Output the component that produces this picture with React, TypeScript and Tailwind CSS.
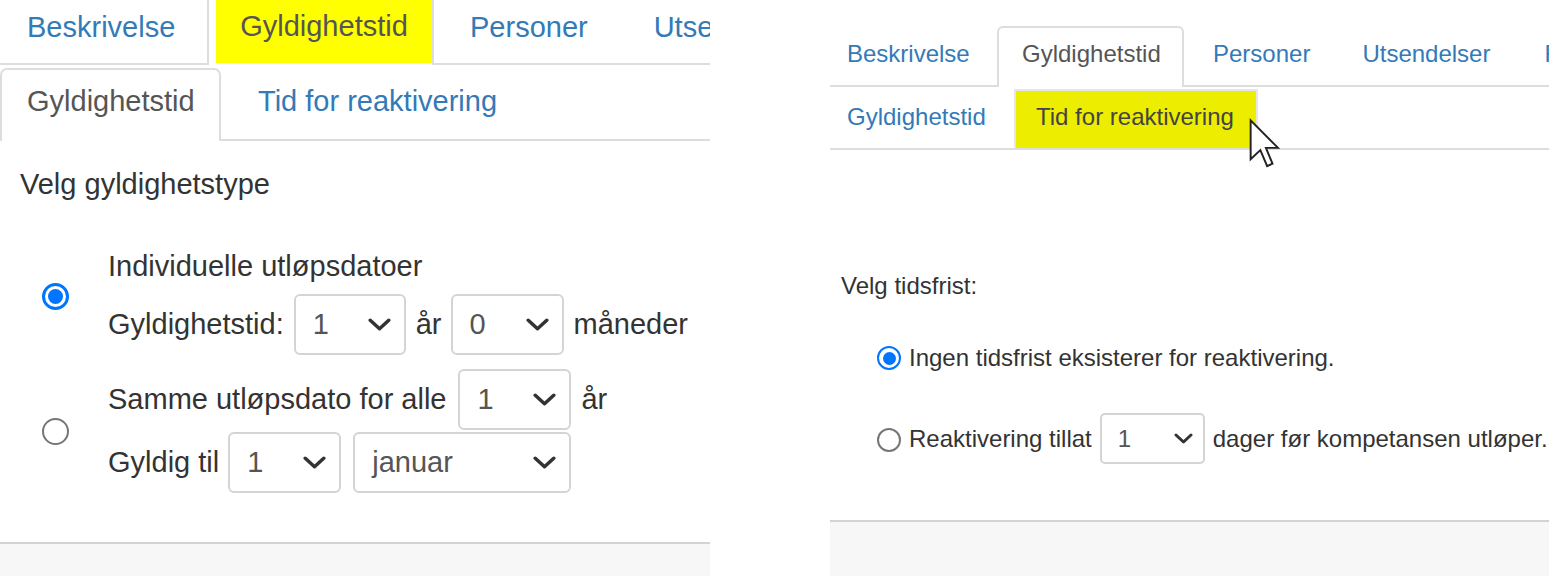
import React from "react";

function Chevron({ w, h, sw }: { w: number; h: number; sw: number }) {
  const p = sw / 2 + 0.5;
  return (
    <svg width={w} height={h} viewBox={`0 0 ${w} ${h}`} className="shrink-0">
      <polyline
        points={`${p},${p} ${w / 2},${h - p} ${w - p},${p}`}
        fill="none"
        stroke="#333"
        strokeWidth={sw}
        strokeLinecap="round"
        strokeLinejoin="round"
      />
    </svg>
  );
}

function LSelect({ value, w }: { value: string; w: string }) {
  return (
    <div
      className={`flex h-[61px] shrink-0 items-center justify-between rounded-[6px] border-2 border-[#d4d4d4] bg-white pl-[17px] pr-[13px] text-[#555] ${w}`}
    >
      <span>{value}</span>
      <Chevron w={23} h={13} sw={3.5} />
    </div>
  );
}

function LRadio({ checked }: { checked: boolean }) {
  return checked ? (
    <div className="flex h-[27px] w-[27px] shrink-0 items-center justify-center rounded-full border-[3px] border-[#0075ff] bg-white">
      <div className="h-[15px] w-[15px] rounded-full bg-[#0075ff]" />
    </div>
  ) : (
    <div className="h-[27px] w-[27px] shrink-0 rounded-full border-2 border-[#767676] bg-white" />
  );
}

function RRadio({ checked }: { checked: boolean }) {
  return checked ? (
    <div className="flex h-[24px] w-[24px] shrink-0 items-center justify-center rounded-full border-[2.5px] border-[#0075ff] bg-white">
      <div className="h-[13px] w-[13px] rounded-full bg-[#0075ff]" />
    </div>
  ) : (
    <div className="h-[24px] w-[24px] shrink-0 rounded-full border-2 border-[#767676] bg-white" />
  );
}

function LeftPanel() {
  return (
    <div className="relative flex h-[576px] w-[710px] shrink-0 flex-col overflow-hidden bg-white text-[29px] leading-[33px] text-[#333]">
      {/* top tabs */}
      <div className="flex h-[65px] shrink-0 items-start border-b-2 border-[#ddd] whitespace-nowrap">
        <div className="w-[207px] shrink-0 pl-[27px] pt-[11px] text-[#337ab7]">Beskrivelse</div>
        <div className="relative z-10 -mb-[2px] h-[65px] w-[227px] shrink-0 border-x-2 border-[#ddd] bg-white pl-[7px]">
          <div className="flex h-[63px] w-[216px] justify-center bg-[#ffff00] pt-[10px] text-[#555]">Gyldighetstid</div>
        </div>
        <div className="shrink-0 pl-[36px] pt-[11px] text-[#337ab7]">Personer</div>
        <div className="shrink-0 pl-[66px] pt-[11px] text-[#337ab7]">Utsendelser</div>
      </div>

      {/* sub tabs */}
      <div className="mt-[3px] flex h-[73px] shrink-0 items-start border-b-2 border-[#ddd] whitespace-nowrap">
        <div className="relative z-10 h-[73px] w-[221px] shrink-0 rounded-t-[7px] border-x-2 border-t-2 border-[#ddd] bg-white pl-[25px] pt-[15px] text-[#555]">
          Gyldighetstid
        </div>
        <div className="shrink-0 pl-[37px] pt-[17px] text-[#337ab7]">Tid for reaktivering</div>
      </div>

      <div className="mt-[27px] pl-[20px]">Velg gyldighetstype</div>

      {/* group 1 */}
      <div className="mt-[49px] flex whitespace-nowrap">
        <div className="ml-[42px] mt-[33px]">
          <LRadio checked />
        </div>
        <div className="ml-[39px] flex flex-col">
          <div>Individuelle utløpsdatoer</div>
          <div className="mt-[11px] flex items-center">
            <span>Gyldighetstid:</span>
            <div className="ml-[10px]">
              <LSelect value="1" w="w-[112px]" />
            </div>
            <span className="ml-[10px]">år</span>
            <div className="ml-[9px]">
              <LSelect value="0" w="w-[113px]" />
            </div>
            <span className="ml-[10px]">måneder</span>
          </div>
        </div>
      </div>

      {/* group 2 */}
      <div className="mt-[14px] flex whitespace-nowrap">
        <div className="ml-[42px] mt-[49px]">
          <LRadio checked={false} />
        </div>
        <div className="ml-[39px] flex flex-col">
          <div className="flex h-[61px] items-center">
            <span>Samme utløpsdato for alle</span>
            <div className="ml-[12px]">
              <LSelect value="1" w="w-[113px]" />
            </div>
            <span className="ml-[10px]">år</span>
          </div>
          <div className="mt-[2px] flex items-center">
            <span>Gyldig til</span>
            <div className="ml-[9px]">
              <LSelect value="1" w="w-[113px]" />
            </div>
            <div className="ml-[12px]">
              <LSelect value="januar" w="w-[218px]" />
            </div>
          </div>
        </div>
      </div>

      <div className="mt-[49px] flex-1 border-t-2 border-[#d3d3d3] bg-[#f7f7f7]" />
    </div>
  );
}

function RightPanel() {
  return (
    <div className="relative flex h-[576px] w-[719px] shrink-0 flex-col overflow-hidden bg-white text-[24px] leading-[28px] text-[#333]">
      {/* top tabs */}
      <div className="flex h-[87px] shrink-0 items-start border-b-2 border-[#ddd] whitespace-nowrap">
        <div className="w-[167px] shrink-0 pl-[17px] pt-[40px] text-[#337ab7]">Beskrivelse</div>
        <div className="relative z-10 mt-[26px] h-[61px] w-[187px] shrink-0 rounded-t-[6px] border-x-2 border-t-2 border-[#ddd] bg-white pl-[23px] pt-[12px] text-[#555]">
          Gyldighetstid
        </div>
        <div className="shrink-0 pl-[29px] pt-[40px] text-[#337ab7]">Personer</div>
        <div className="shrink-0 pl-[52px] pt-[40px] text-[#337ab7]">Utsendelser</div>
        <div className="shrink-0 pl-[54px] pt-[40px] text-[#337ab7]">Fremdrift</div>
      </div>

      {/* sub tabs */}
      <div className="flex h-[63px] shrink-0 items-start border-b-2 border-[#ddd] whitespace-nowrap">
        <div className="w-[184px] shrink-0 pl-[17px] pt-[16px] text-[#337ab7]">Gyldighetstid</div>
        <div className="mt-[2px] h-[59px] w-[244px] shrink-0 border-x-2 border-t-2 border-[#e6e6e6] bg-[#eded00] pl-[20px] pt-[12px] text-[#444]">
          Tid for reaktivering
        </div>
      </div>

      <div className="mt-[122px] pl-[11px]">Velg tidsfrist:</div>

      <div className="mt-[44px] flex h-[28px] items-center pl-[47px] whitespace-nowrap">
        <RRadio checked />
        <span className="ml-[8px]">Ingen tidsfrist eksisterer for reaktivering.</span>
      </div>

      <div className="mt-[41px] flex h-[51px] items-center pl-[47px] whitespace-nowrap">
        <div className="mt-[3px]">
          <RRadio checked={false} />
        </div>
        <span className="ml-[8px]">Reaktivering tillat</span>
        <div className="ml-[8px] flex h-[51px] w-[105px] shrink-0 items-center justify-between rounded-[5px] border-2 border-[#d4d4d4] bg-white pl-[16px] pr-[10px] text-[#555]">
          <span>1</span>
          <Chevron w={19} h={11} sw={3} />
        </div>
        <span className="ml-[8px]">dager før kompetansen utløper.</span>
      </div>

      <div className="mt-[56px] flex-1 border-t-2 border-[#d3d3d3] bg-[#f7f7f7]" />

      {/* mouse cursor */}
      <svg
        className="absolute left-[418px] top-[118px]"
        width="32"
        height="51"
        viewBox="0 0 13 21"
      >
        <path
          d="M1,1 L1,17 L5,13.2 L7.8,19.8 L10,18.8 L7.3,12.3 L12.3,12.3 Z"
          fill="#fff"
          stroke="#222"
          strokeWidth="0.8"
          strokeLinejoin="miter"
        />
      </svg>
    </div>
  );
}

export default function App() {
  return (
    <div className="flex h-[576px] w-[1563px] overflow-hidden bg-white font-['Liberation_Sans',Arial,sans-serif]">
      <LeftPanel />
      <div className="w-[120px] shrink-0" />
      <RightPanel />
    </div>
  );
}
